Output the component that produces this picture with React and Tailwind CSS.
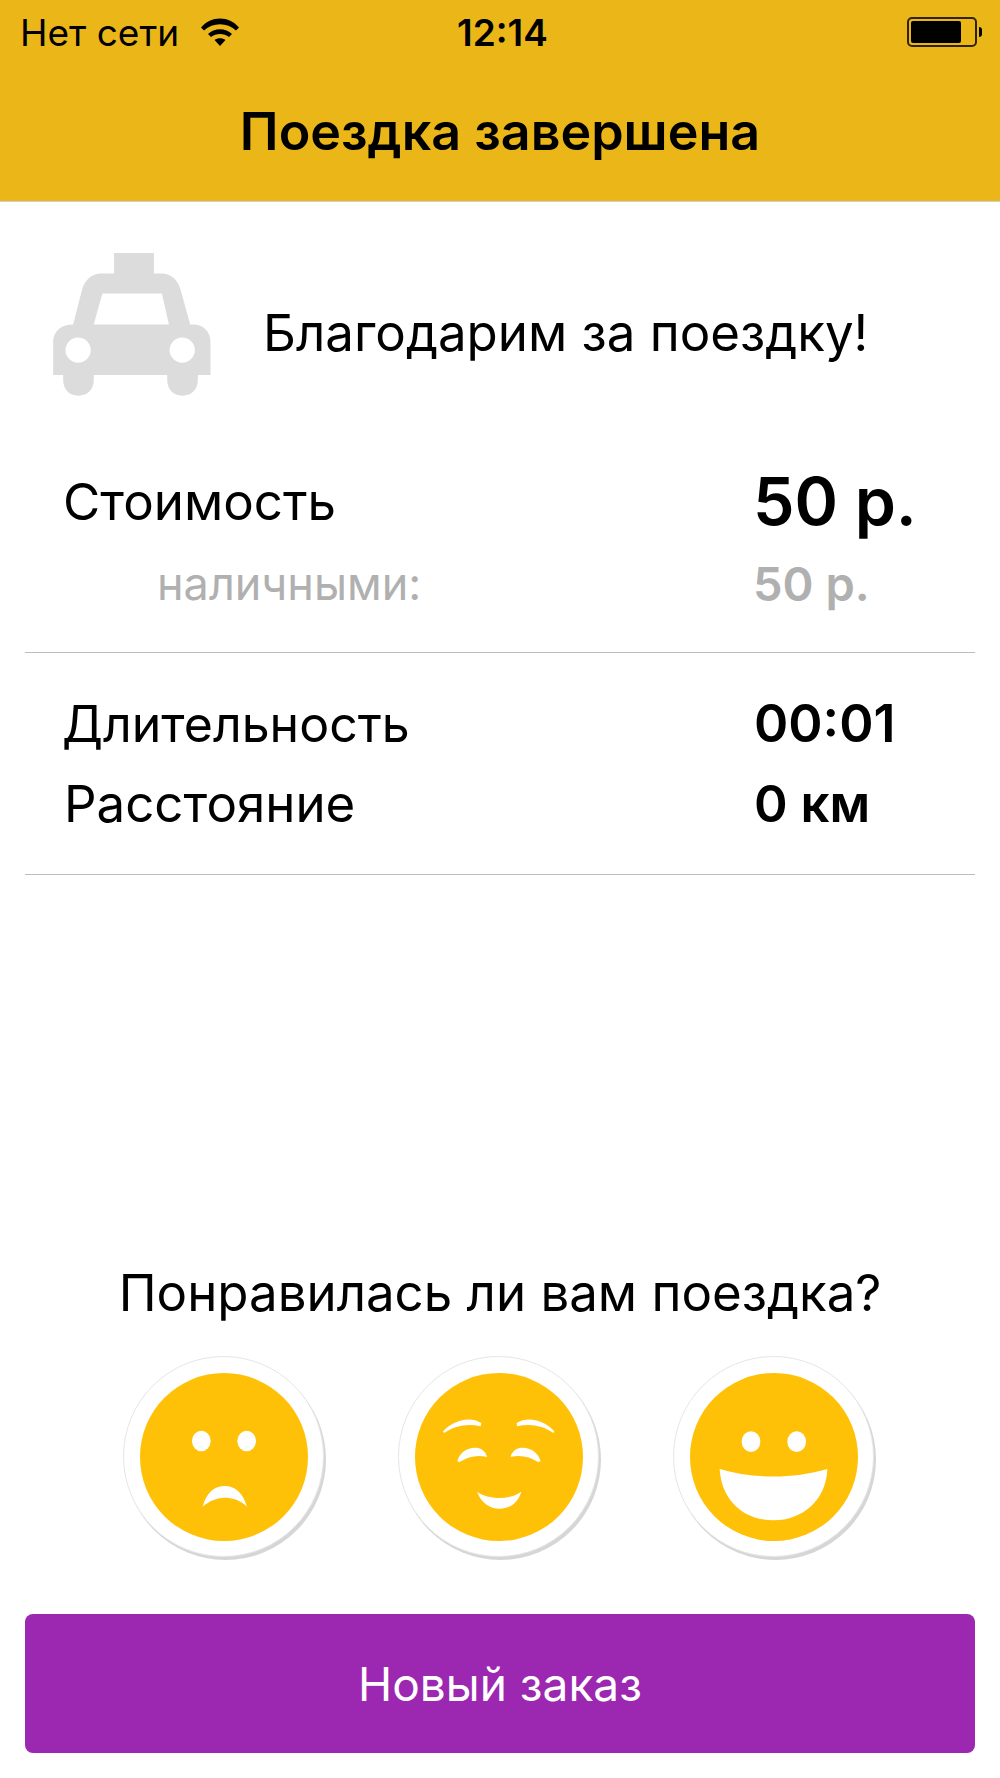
const Wifi = () => (
  <svg width="38" height="28" viewBox="0 0 38 28" className="ml-[22px]">
    <path d="M0 9.5C10-2.5 28-2.5 38 9.5L35 12.5C26 4 12 4 3 12.5Z" fill="#000" />
    <path d="M7 16C13 9.5 25 9.5 31 16L28 19C23 15 15 15 10 19Z" fill="#000" />
    <path d="M13.5 22C16.5 19.5 21.5 19.5 24.5 22L19 28Z" fill="#000" />
  </svg>
);

const Battery = () => (
  <div className="flex items-center">
    <div className="w-[70px] h-[30px] rounded-[5px] border-2 border-black/80 p-[2px]">
      <div className="h-full w-[50px] rounded-[2px] bg-black" />
    </div>
    <div className="w-[3px] h-[10px] ml-[2px] rounded-r-full bg-black" />
  </div>
);

const TaxiIcon = () => (
  <svg width="158" height="143" viewBox="70 68 474 430" fill="#dcdcdc">
    <path
      fillRule="evenodd"
      d="M253 68H373V130H395C425 130 447 150 455 185L482 283H490C522 283 543 305 543 335V435H505V450C505 478 487 497 459 497C431 497 413 478 413 450V435H192V450C192 478 174 497 146 497C118 497 100 478 100 450V435H70V335C70 305 92 283 130 283L155 185C163 150 185 130 215 130H253ZM218 190L192 283H418L397 190ZM145 322A38 38 0 1 0 145 398A38 38 0 1 0 145 322ZM458 322A38 38 0 1 0 458 398A38 38 0 1 0 458 322Z"
    />
  </svg>
);

const Face = ({ cx, cy, children }) => (
  <div className="w-[201px] h-[201px] rounded-full bg-white border border-[#e6e6e6] shadow-[2px_3px_0_#d6d6d6] flex items-center justify-center">
    <svg width="170" height="170" viewBox={`${cx - 255} ${cy - 255} 510 510`}>
      <circle cx={cx} cy={cy} r="252" fill="#ffc107" />
      <g fill="#fff">{children}</g>
    </svg>
  </div>
);

const Row = ({ label, value, labelClass = '', valueClass = '', className = '' }) => (
  <div className={`grid grid-cols-[755px_1fr] items-center ${className}`}>
    <div className={labelClass}>{label}</div>
    <div className={valueClass}>{value}</div>
  </div>
);

export default function App() {
  return (
    <div className="w-[1000px] h-[1778px] flex flex-col bg-white text-black font-['Inter',sans-serif]">
      <header className="h-[202px] bg-[#ebb718] border-b border-[#cfcfcf] flex flex-col">
        <div className="relative h-[64px] flex items-center justify-between pl-[20px] pr-[18px] text-[37px] leading-none">
          <div className="flex items-center">
            <span>Нет сети</span>
            <Wifi />
          </div>
          <span className="absolute left-[457px] font-semibold">12:14</span>
          <Battery />
        </div>
        <h1 className="flex-1 flex items-center justify-center pb-[2px] text-[52px] leading-none font-semibold">
          Поездка завершена
        </h1>
      </header>

      <div className="flex items-center pl-[53px] pt-[51px]">
        <TaxiIcon />
        <div className="ml-[52px] pt-[16px] text-[51px] leading-none">Благодарим за поездку!</div>
      </div>

      <div className="mx-[25px] mt-[65px] border-b border-[#bdbdbd] h-[192px]">
        <Row
          label="Стоимость"
          value="50 р."
          className="h-[80px]"
          labelClass="pl-[38px] text-[51px] leading-none"
          valueClass="text-[66px] leading-none font-semibold -ml-[27px]"
        />
        <Row
          label="наличными:"
          value="50 р."
          className="h-[50px] mt-[17px]"
          labelClass="pl-[132px] text-[45px] leading-none text-[#b0b0b0]"
          valueClass="text-[47px] leading-none font-semibold text-[#b0b0b0] -ml-[27px]"
        />
      </div>

      <div className="mx-[25px] border-b border-[#bdbdbd] h-[222px] pt-[41px]">
        <Row
          label="Длительность"
          value="00:01"
          className="h-[60px]"
          labelClass="pl-[37px] text-[50px] leading-none"
          valueClass="text-[52px] leading-none font-semibold -ml-[26px]"
        />
        <Row
          label="Расстояние"
          value="0 км"
          className="h-[60px] mt-[19px]"
          labelClass="pl-[39px] text-[51px] leading-none"
          valueClass="text-[51px] leading-none font-semibold -ml-[26px]"
        />
      </div>

      <div className="mt-auto text-center text-[51px] leading-none">Понравилась ли вам поездка?</div>

      <div className="flex justify-center gap-[74px] mt-[38px] pr-[3px]">
        <Face cx={338} cy={348}>
          <ellipse cx="270" cy="300" rx="28" ry="31" />
          <ellipse cx="406" cy="300" rx="28" ry="31" />
          <path d="M274 497C285 455 310 435 340 435C370 435 395 455 407 497C385 475 360 470 340 470C320 470 295 478 274 497Z" />
        </Face>
        <Face cx={343} cy={352}>
          <path d="M174 277C195 250 250 225 290 250L288 260C250 250 210 258 180 279Z" />
          <path d="M510 277C490 250 435 225 396 250L397 260C435 250 475 258 505 279Z" />
          <path d="M218 365C225 335 255 320 280 325C295 328 305 340 307 352C280 345 250 350 225 367Z" />
          <path d="M468 365C460 335 430 320 405 325C390 328 380 340 378 352C405 345 435 350 460 367Z" />
          <path d="M277 456C310 480 375 482 410 456C400 490 375 507 345 507C315 507 290 490 277 456Z" />
        </Face>
        <Face cx={343} cy={352}>
          <ellipse cx="274" cy="306" rx="28" ry="31" />
          <ellipse cx="411" cy="306" rx="28" ry="31" />
          <path d="M180 388C280 418 400 418 503 388C500 480 430 542 342 542C250 542 185 480 180 388Z" />
        </Face>
      </div>

      <button className="mx-[25px] mt-[57px] mb-[25px] h-[139px] rounded-[8px] bg-[#9c27b0] text-white text-[46px] leading-none">
        Новый заказ
      </button>
    </div>
  );
}
